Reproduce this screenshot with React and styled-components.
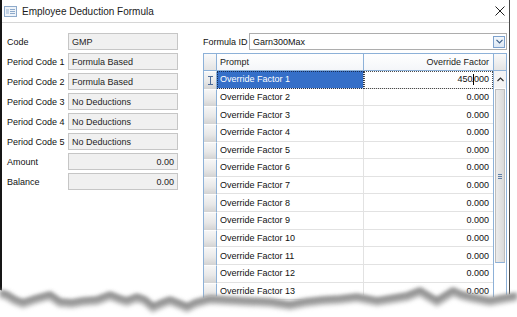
import React from "react";
import styled, { createGlobalStyle } from "styled-components";

const GlobalStyle = createGlobalStyle`
  html, body {
    margin: 0;
    padding: 0;
    background: #fff;
  }
  body {
    font-family: "Liberation Sans", Arial, sans-serif;
  }
`;

const fields = [
  { label: "Code", value: "GMP" },
  { label: "Period Code 1", value: "Formula Based" },
  { label: "Period Code 2", value: "Formula Based" },
  { label: "Period Code 3", value: "No Deductions" },
  { label: "Period Code 4", value: "No Deductions" },
  { label: "Period Code 5", value: "No Deductions" },
  { label: "Amount", value: "0.00", right: true },
  { label: "Balance", value: "0.00", right: true },
];

const rows = Array.from({ length: 14 }, (_, i) => ({
  prompt: `Override Factor ${i + 1}`,
  value: "0.000",
}));

const edge = [
  [0, 290], [7, 292], [15, 297], [23, 300], [35, 296], [50, 292], [60, 299],
  [72, 300], [83, 298], [97, 297], [110, 292], [120, 296], [127, 298],
  [137, 294], [145, 297], [153, 304], [162, 300], [170, 297], [180, 301],
  [187, 304], [195, 300], [210, 296], [227, 297], [245, 298], [270, 299],
  [290, 302], [305, 299], [323, 297], [340, 296], [357, 294], [377, 298],
  [395, 295], [407, 293], [420, 288], [430, 294], [437, 298], [445, 293],
  [453, 288], [462, 292], [470, 294], [480, 296], [490, 298], [505, 295],
  [517, 293],
];

const TOP = 270;
const edgeLine = (dy) =>
  edge.map(([x, y], i) => `${i ? "L" : "M"}${x},${y - TOP + dy}`).join(" ");

const App = () => {
  return (
    <Page>
      <GlobalStyle />
      <Window>
        <TitleBar>
          <svg width="13" height="11" viewBox="0 0 13 11">
            <rect x="0.5" y="0.5" width="12" height="10" fill="#eef3f9" stroke="#8eaacb" />
            <rect x="2" y="3" width="3" height="5" fill="#c3d3e6" />
            <path d="M6 3.5h5M6 5.5h5M6 7.5h5" stroke="#8eaacb" />
          </svg>
          <Title>Employee Deduction Formula</Title>
          <CloseButton>
            <svg width="10" height="10" viewBox="0 0 10 10">
              <path d="M0.5 0.5L9.5 9.5M9.5 0.5L0.5 9.5" stroke="#1e1e1e" strokeWidth="1" />
            </svg>
          </CloseButton>
        </TitleBar>

        <Body>
          <Form>
            {fields.map((f) => (
              <React.Fragment key={f.label}>
                <Label>{f.label}</Label>
                <Field $right={f.right}>{f.value}</Field>
              </React.Fragment>
            ))}
          </Form>

          <RightPanel>
            <FormulaRow>
              <FormulaLabel>Formula ID</FormulaLabel>
              <Combo>
                <ComboText>Garn300Max</ComboText>
                <DropButton>
                  <svg width="7" height="5" viewBox="0 0 7 5">
                    <path d="M0.5 0.8L3.5 3.8L6.5 0.8" stroke="#3c5f8a" fill="none" strokeWidth="1.2" />
                  </svg>
                </DropButton>
              </Combo>
            </FormulaRow>

            <Grid>
              <Table>
                <HeaderRow>
                  <CornerCell />
                  <HeaderCell>Prompt</HeaderCell>
                  <HeaderCell $right>Override Factor</HeaderCell>
                </HeaderRow>
                {rows.map((r, i) => (
                  <Row key={r.prompt}>
                    <RowHeader>
                      {i === 0 && (
                        <svg width="7" height="9" viewBox="0 0 7 9">
                          <path d="M1 0.5h5M1 8.5h5M3.5 0.5v8" stroke="#4f6c99" fill="none" />
                        </svg>
                      )}
                    </RowHeader>
                    <PromptCell $selected={i === 0}>{r.prompt}</PromptCell>
                    {i === 0 ? (
                      <ValueCell $editing>
                        450<Caret />.000
                      </ValueCell>
                    ) : (
                      <ValueCell>{r.value}</ValueCell>
                    )}
                  </Row>
                ))}
              </Table>
              <ScrollBar>
                <ScrollCorner />
                <ScrollArrow>
                  <svg width="7" height="5" viewBox="0 0 7 5">
                    <path d="M0.5 4L3.5 1L6.5 4" stroke="#2a2a2a" fill="none" strokeWidth="1.1" />
                  </svg>
                </ScrollArrow>
                <Thumb>
                  <Grip>
                    <span />
                    <span />
                    <span />
                  </Grip>
                </Thumb>
              </ScrollBar>
            </Grid>
          </RightPanel>
        </Body>
      </Window>

      <TornEdge width="517" height={317 - TOP} viewBox={`0 0 517 ${317 - TOP}`}>
        <defs>
          <filter id="soft" x="-5%" y="-50%" width="110%" height="200%">
            <feGaussianBlur stdDeviation="2" />
          </filter>
        </defs>
        <path d={`${edgeLine(0)} L517,${317 - TOP} L0,${317 - TOP} Z`} fill="#fff" />
        <path d={edgeLine(4)} stroke="#b4b4b4" strokeWidth="8" fill="none" filter="url(#soft)" />
        <path d={edgeLine(2)} stroke="#7c7c7c" strokeWidth="3" fill="none" filter="url(#soft)" />
      </TornEdge>
    </Page>
  );
};

const Page = styled.div`
  position: relative;
  width: 517px;
  height: 317px;
  overflow: hidden;
  background: #fff;
`;

const Window = styled.div`
  width: 510px;
  height: 317px;
  box-sizing: border-box;
  border-left: 2px solid #161616;
  border-right: 1px solid #4a4a4a;
  background: #fff;
  display: flex;
  flex-direction: column;
`;

const TitleBar = styled.div`
  height: 23px;
  flex: none;
  box-sizing: border-box;
  border-bottom: 1px solid #d6d6d6;
  display: flex;
  align-items: center;
  gap: 5px;
  padding: 0 4px 0 2px;
`;

const Title = styled.span`
  font-size: 10px;
  color: #1a1a1a;
`;

const CloseButton = styled.div`
  margin-left: auto;
  display: flex;
  align-items: center;
`;

const Body = styled.div`
  flex: 1;
  min-height: 0;
  display: flex;
  padding: 10px 2px 0 5px;
`;

const Form = styled.div`
  display: grid;
  grid-template-columns: 61px 110px;
  grid-auto-rows: 17px;
  row-gap: 3px;
  align-content: start;
  align-items: center;
`;

const Label = styled.span`
  font-size: 9px;
  color: #111;
  white-space: nowrap;
`;

const Field = styled.div`
  height: 17px;
  box-sizing: border-box;
  border: 1px solid #c6c6c6;
  background: #f0f0f0;
  font-size: 9px;
  color: #1e1e1e;
  padding: 0 3px;
  display: flex;
  align-items: center;
  justify-content: ${(p) => (p.$right ? "flex-end" : "flex-start")};
`;

const RightPanel = styled.div`
  flex: 1;
  min-width: 0;
  margin-left: 25px;
  display: flex;
  flex-direction: column;
  gap: 3px;
`;

const FormulaRow = styled.div`
  display: flex;
  align-items: center;
  height: 17px;
  flex: none;
`;

const FormulaLabel = styled.span`
  width: 46px;
  flex: none;
  font-size: 9px;
  color: #111;
`;

const Combo = styled.div`
  flex: 1;
  height: 17px;
  box-sizing: border-box;
  border: 1px solid #adadad;
  background: #fff;
  display: flex;
  align-items: center;
  padding: 0 1px 0 3px;
`;

const ComboText = styled.span`
  flex: 1;
  font-size: 9px;
  color: #111;
`;

const DropButton = styled.div`
  width: 12px;
  height: 12px;
  box-sizing: border-box;
  border: 1px solid #7da2ce;
  background: linear-gradient(#f4f8fc, #dde8f4);
  display: flex;
  align-items: center;
  justify-content: center;
`;

const Grid = styled.div`
  flex: 1;
  min-height: 0;
  overflow: hidden;
  border: 1px solid #8db1d8;
  display: flex;
`;

const Table = styled.div`
  flex: 1;
  display: flex;
  flex-direction: column;
`;

const rowColumns = `
  display: grid;
  grid-template-columns: 13px 147px 1fr;
  flex: none;
`;

const HeaderRow = styled.div`
  ${rowColumns}
  height: 17px;
`;

const CornerCell = styled.div`
  box-sizing: border-box;
  border-right: 1px solid #8db1d8;
  border-bottom: 1px solid #8db1d8;
  background: linear-gradient(#fafafa, #e4e4e4);
`;

const HeaderCell = styled.div`
  box-sizing: border-box;
  border-right: ${(p) => (p.$right ? "none" : "1px solid #8db1d8")};
  border-bottom: 1px solid #8db1d8;
  background: linear-gradient(#ffffff, #f4f6f9);
  font-size: 9px;
  color: #1a1a1a;
  display: flex;
  align-items: center;
  justify-content: ${(p) => (p.$right ? "flex-end" : "flex-start")};
  padding: 0 4px 0 3px;
`;

const Row = styled.div`
  ${rowColumns}
  height: 17.64px;
`;

const RowHeader = styled.div`
  box-sizing: border-box;
  border-right: 1px solid #8db1d8;
  border-top: 1px solid #fdfdfd;
  background: linear-gradient(#f6f6f6 0%, #e8e8e8 55%, #d3d3d3 100%);
  display: flex;
  align-items: center;
  justify-content: center;
`;

const PromptCell = styled.div`
  box-sizing: border-box;
  border-right: 1px solid #e2e2e2;
  border-bottom: 1px solid #e2e2e2;
  font-size: 9px;
  display: flex;
  align-items: center;
  padding-left: 3px;
  color: ${(p) => (p.$selected ? "#fff" : "#111")};
  background: ${(p) => (p.$selected ? "#356fc8" : "#fff")};
  outline: ${(p) => (p.$selected ? "1px dotted #1b2e52" : "none")};
  outline-offset: -1px;
`;

const ValueCell = styled.div`
  box-sizing: border-box;
  border-bottom: 1px solid #e2e2e2;
  font-size: 9px;
  color: #111;
  display: flex;
  align-items: center;
  justify-content: flex-end;
  padding-right: 4px;
  background: #fff;
  outline: ${(p) => (p.$editing ? "1px dotted #4a4a4a" : "none")};
  outline-offset: -1px;
`;

const Caret = styled.span`
  display: inline-block;
  width: 1px;
  height: 11px;
  background: #000;
  margin-right: -2px;
  position: relative;
  left: 1px;
`;

const ScrollBar = styled.div`
  width: 13px;
  flex: none;
  box-sizing: border-box;
  border-left: 1px solid #8db1d8;
  display: flex;
  flex-direction: column;
`;

const ScrollCorner = styled.div`
  height: 17px;
  flex: none;
  box-sizing: border-box;
  border-bottom: 1px solid #8db1d8;
  background: linear-gradient(#fafafa, #e4e4e4);
`;

const ScrollArrow = styled.div`
  height: 17px;
  flex: none;
  display: flex;
  align-items: center;
  justify-content: center;
  background: #f4f4f4;
`;

const Thumb = styled.div`
  height: 174px;
  flex: none;
  margin: 1px 1px 0 1px;
  box-sizing: border-box;
  border: 1px solid #bdbdbd;
  border-bottom-color: #8db1d8;
  background: linear-gradient(90deg, #ececec, #dadada);
  display: flex;
  align-items: center;
  justify-content: center;
`;

const Grip = styled.div`
  display: flex;
  flex-direction: column;
  gap: 1px;

  span {
    display: block;
    width: 4px;
    height: 1px;
    background: #5f7fa8;
  }
`;

const TornEdge = styled.svg`
  position: absolute;
  left: 0;
  bottom: 0;
  display: block;
`;

export default App;
